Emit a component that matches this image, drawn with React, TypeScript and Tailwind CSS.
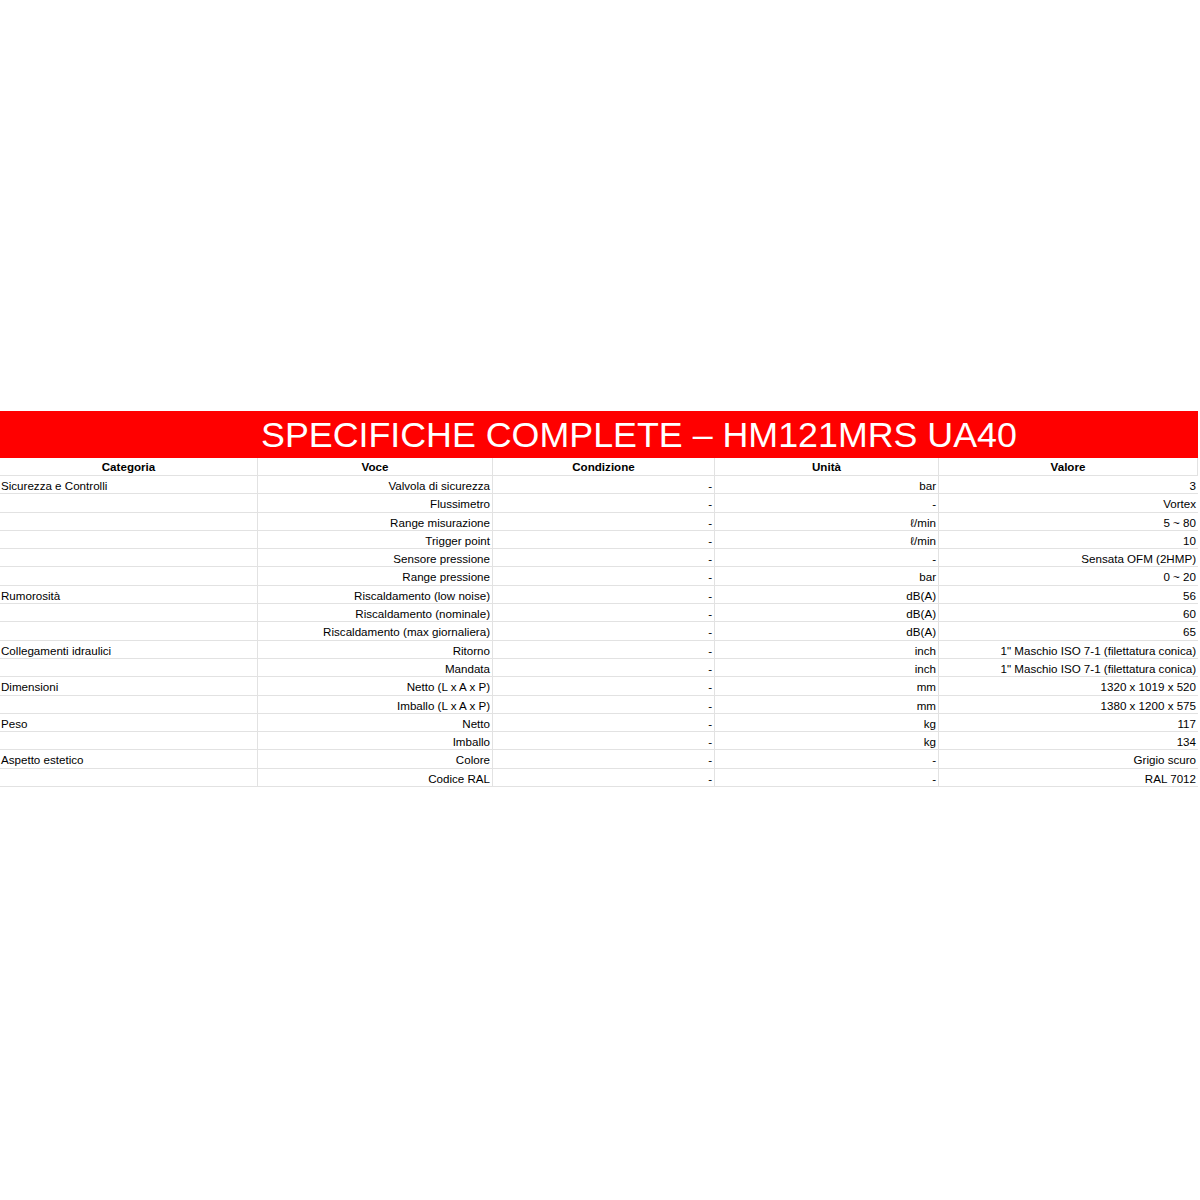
import React from 'react';

const rows: [string, string, string, string, string][] = [
  ['Sicurezza e Controlli', 'Valvola di sicurezza', '-', 'bar', '3'],
  ['', 'Flussimetro', '-', '-', 'Vortex'],
  ['', 'Range misurazione', '-', 'ℓ/min', '5 ~ 80'],
  ['', 'Trigger point', '-', 'ℓ/min', '10'],
  ['', 'Sensore pressione', '-', '-', 'Sensata OFM (2HMP)'],
  ['', 'Range pressione', '-', 'bar', '0 ~ 20'],
  ['Rumorosità', 'Riscaldamento (low noise)', '-', 'dB(A)', '56'],
  ['', 'Riscaldamento (nominale)', '-', 'dB(A)', '60'],
  ['', 'Riscaldamento (max giornaliera)', '-', 'dB(A)', '65'],
  ['Collegamenti idraulici', 'Ritorno', '-', 'inch', '1" Maschio ISO 7-1 (filettatura conica)'],
  ['', 'Mandata', '-', 'inch', '1" Maschio ISO 7-1 (filettatura conica)'],
  ['Dimensioni', 'Netto (L x A x P)', '-', 'mm', '1320 x 1019 x 520'],
  ['', 'Imballo (L x A x P)', '-', 'mm', '1380 x 1200 x 575'],
  ['Peso', 'Netto', '-', 'kg', '117'],
  ['', 'Imballo', '-', 'kg', '134'],
  ['Aspetto estetico', 'Colore', '-', '-', 'Grigio scuro'],
  ['', 'Codice RAL', '-', '-', 'RAL 7012'],
];

const headers = ['Categoria', 'Voce', 'Condizione', 'Unità', 'Valore'];

export default function App() {
  return (
    <div className="w-[1200px] h-[1200px] bg-white pt-[411px] font-['Liberation_Sans',Arial,sans-serif] text-black">
      <div className="w-[1198px]">
        <div className="h-[47px] bg-[#ff0000] flex items-center pl-[261px] pt-[2px]">
          <span className="text-white text-[35.8px] leading-none">SPECIFICHE COMPLETE – HM121MRS UA40</span>
        </div>
        <div className="grid grid-cols-[258px_235px_222px_224px_259px] text-[11.6px]">
          {headers.map((h) => (
            <div
              key={h}
              className="h-[18px] pt-[1px] border-r border-b border-[#e2e2e2] last:border-r-0 flex items-center justify-center font-bold"
            >
              {h}
            </div>
          ))}
          {rows.map((r, i) =>
            r.map((c, j) => (
              <div
                key={i + '-' + j}
                className={
                  'h-[18.3px] pt-[2px] border-b border-[#e2e2e2] flex items-center whitespace-nowrap ' +
                  (j === 4 ? '' : 'border-r ') +
                  (j === 0 ? 'justify-start pl-[1px]' : 'justify-end pr-[2px]')
                }
              >
                {c}
              </div>
            ))
          )}
        </div>
      </div>
    </div>
  );
}
